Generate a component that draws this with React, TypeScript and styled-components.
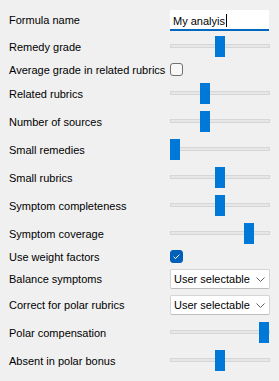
import React from 'react';
import styled, {createGlobalStyle} from 'styled-components';

type SettingType =
    | {kind: 'text', label: string, value: string}
    | {kind: 'slider', label: string, value: number}
    | {kind: 'check', label: string, checked: boolean}
    | {kind: 'select', label: string, value: string}

const settings: SettingType[] = [
    {kind: 'text', label: 'Formula name', value: 'My analyis'},
    {kind: 'slider', label: 'Remedy grade', value: 0.5},
    {kind: 'check', label: 'Average grade in related rubrics', checked: false},
    {kind: 'slider', label: 'Related rubrics', value: 0.337},
    {kind: 'slider', label: 'Number of sources', value: 0.337},
    {kind: 'slider', label: 'Small remedies', value: 0},
    {kind: 'slider', label: 'Small rubrics', value: 0.5},
    {kind: 'slider', label: 'Symptom completeness', value: 0.5},
    {kind: 'slider', label: 'Symptom coverage', value: 0.83},
    {kind: 'check', label: 'Use weight factors', checked: true},
    {kind: 'select', label: 'Balance symptoms', value: 'User selectable'},
    {kind: 'select', label: 'Correct for polar rubrics', value: 'User selectable'},
    {kind: 'slider', label: 'Polar compensation', value: 1},
    {kind: 'slider', label: 'Absent in polar bonus', value: 0.5},
]

const rowHeights = {text: 24, slider: 28, check: 19, select: 26}

const Slider = ({value}: {value: number}) => (
    <SliderBox>
        <Track/>
        <Thumb style={{left: Math.round(value * 89)}}/>
    </SliderBox>
)

const Checkbox = ({checked}: {checked: boolean}) => (
    <CheckBox $checked={checked}>
        {checked && (
            <svg width="13" height="13" viewBox="0 0 13 13">
                <path d="M3.6 6.8 L5.5 8.6 L9.4 4.6" fill="none" stroke="#fff" strokeWidth="1"/>
            </svg>
        )}
    </CheckBox>
)

const Select = ({value}: {value: string}) => (
    <Combo>
        <span>{value}</span>
        <svg width="9" height="5" viewBox="0 0 9 5">
            <path d="M0.5 0.5 L4.5 4.5 L8.5 0.5" fill="none" stroke="#606060" strokeWidth="1"/>
        </svg>
    </Combo>
)

export default function App() {
    return (
        <>
            <GlobalStyle/>
            <Panel>
                {settings.map(s => (
                    <Row key={s.label} $h={rowHeights[s.kind]}>
                        <Label $shift={s.kind === 'slider' ? 1 : 0}>{s.label}</Label>
                        {s.kind === 'text' && <TextBox>{s.value}<Caret/></TextBox>}
                        {s.kind === 'slider' && <Slider value={s.value}/>}
                        {s.kind === 'check' && <Checkbox checked={s.checked}/>}
                        {s.kind === 'select' && <Select value={s.value}/>}
                    </Row>
                ))}
            </Panel>
        </>
    )
}

const GlobalStyle = createGlobalStyle`
  html, body {
    margin: 0;
    padding: 0;
    background: #f0f0f0;
  }
  body {
    font-family: "Liberation Sans", Arial, sans-serif;
    font-size: 11px;
    color: #000;
  }
`;

const Panel = styled.div`
  display: flex;
  flex-direction: column;
  padding: 8px 9px 0 9px;
  width: 261px;
`;

const Row = styled.div<{ $h: number }>`
  display: grid;
  grid-template-columns: 161px 100px;
  align-items: center;
  height: ${p => p.$h}px;
`;

const Label = styled.div<{ $shift: number }>`
  white-space: nowrap;
  line-height: 14px;
  transform: translateY(${p => p.$shift}px);
`;

const TextBox = styled.div`
  box-sizing: border-box;
  height: 21px;
  width: 99px;
  margin-top: 1px;
  background: #fff;
  border-bottom: 2px solid #0067c0;
  padding: 2px 0 0 3px;
  white-space: nowrap;
  line-height: 14px;
  display: flex;
  align-items: center;
`;

const Caret = styled.span`
  display: inline-block;
  width: 1px;
  height: 13px;
  background: #000;
  margin-left: 1px;
`;

const SliderBox = styled.div`
  position: relative;
  width: 100px;
  height: 21px;
`;

const Track = styled.div`
  box-sizing: border-box;
  margin-top: 8px;
  height: 4px;
  width: 100px;
  background: #e7e7e7;
  border: 1px solid #d6d6d6;
`;

const Thumb = styled.div`
  position: absolute;
  top: 0;
  width: 10px;
  height: 21px;
  background: #0078d7;
`;

const CheckBox = styled.div<{ $checked: boolean }>`
  box-sizing: border-box;
  width: 13px;
  height: 13px;
  border-radius: 3px;
  display: flex;
  background: ${p => p.$checked ? '#005fb8' : '#f7f7f7'};
  border: 1px solid ${p => p.$checked ? '#005fb8' : '#707070'};
  svg { margin: -1px; }
`;

const Combo = styled.div`
  box-sizing: border-box;
  width: 100px;
  height: 20px;
  background: #fff;
  border: 1px solid #d4d4d4;
  border-bottom-color: #bcbcbc;
  border-radius: 2px;
  display: flex;
  align-items: center;
  justify-content: space-between;
  padding: 0 4px 0 3px;
  white-space: nowrap;
`;
